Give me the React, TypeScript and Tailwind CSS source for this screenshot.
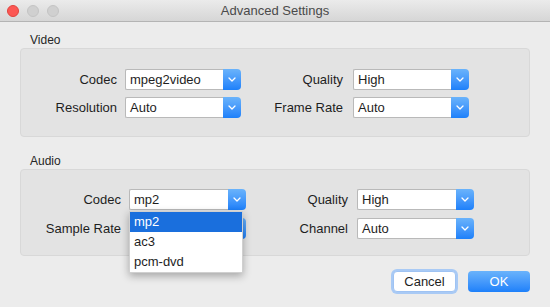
import { clsx } from "clsx";

const font = { fontFamily: '"Liberation Sans", Arial, sans-serif' };

// ─── Popup select (macOS style) ─────────────────────────────────────────────

function Chevron() {
    return (
        <svg width="8" height="5" viewBox="0 0 8 5" aria-hidden="true">
            <path d="M1 1 L4 4 L7 1" fill="none" stroke="white" strokeWidth="1.3" strokeLinecap="round" strokeLinejoin="round" />
        </svg>
    );
}

function Select({ value, width, menu }: { value: string; width: string; menu?: string[] }) {
    return (
        <div className={clsx("relative flex h-[21px]", width)}>
            <div className="flex-1 min-w-0 bg-white border border-[#b9b9b9] border-r-0 rounded-l-[2px] pl-[4px] text-[13px] leading-[19px] text-[#1e1e1e]">
                {value}
            </div>
            <div className="w-[18px] shrink-0 rounded-r-[4px] bg-gradient-to-b from-[#6ab3fb] to-[#1c80fa] flex items-center justify-center">
                <Chevron />
            </div>
            {menu && (
                <div className="absolute left-0 top-[22px] w-[114px] z-10 bg-white shadow-[0_3px_8px_rgba(0,0,0,0.3)] border border-[#d0d0d0]">
                    {menu.map((m, i) => (
                        <div
                            key={m}
                            className={clsx(
                                "h-[20px] pl-[4px] text-[13px] leading-[20px]",
                                i === 0 ? "bg-[#1a6fdd] text-white" : "text-[#1e1e1e]"
                            )}
                        >
                            {m}
                        </div>
                    ))}
                </div>
            )}
        </div>
    );
}

function Label({ text, width }: { text: string; width: string }) {
    return (
        <div className={clsx("shrink-0 text-right text-[13px] leading-[21px] text-[#1e1e1e]", width)}>{text}</div>
    );
}

// ─── Group box ──────────────────────────────────────────────────────────────

function Group({ title, children, className }: { title: string; children: React.ReactNode; className?: string }) {
    return (
        <div className={className}>
            <div className="pl-[10px] text-[12px] leading-[14px] text-[#262626] mb-[1px]">{title}</div>
            <div className="bg-[#e3e3e3] border border-[#d8d8d8] rounded-[4px]">{children}</div>
        </div>
    );
}

export default function App() {
    return (
        <div className="w-[550px] h-[307px] bg-[#ececec] overflow-hidden flex flex-col" style={font}>
            {/* Title bar */}
            <div className="h-[22px] shrink-0 relative flex items-center justify-center bg-gradient-to-b from-[#ebebeb] to-[#d6d6d6] border-b border-[#b4b4b4]">
                <div className="absolute left-[7px] top-[5px] flex gap-[8px]">
                    <span className="w-[12px] h-[12px] rounded-full bg-[#fc5753] border border-[#e0443e]" />
                    <span className="w-[12px] h-[12px] rounded-full bg-[#d0d0d0] border border-[#c4c4c4]" />
                    <span className="w-[12px] h-[12px] rounded-full bg-[#d0d0d0] border border-[#c4c4c4]" />
                </div>
                <span className="text-[13px] text-[#4a4a4a]">Advanced Settings</span>
            </div>

            <div className="px-[20px] pt-[11px]">
                <Group title="Video">
                    <div className="pt-[20px] pb-[18px] flex flex-col gap-[7px]">
                        <div className="flex items-center">
                            <Label text="Codec" width="w-[96px]" />
                            <div className="ml-[8px]"><Select value="mpeg2video" width="w-[116px]" /></div>
                            <Label text="Quality" width="w-[102px]" />
                            <div className="ml-[10px]"><Select value="High" width="w-[116px]" /></div>
                        </div>
                        <div className="flex items-center">
                            <Label text="Resolution" width="w-[96px]" />
                            <div className="ml-[8px]"><Select value="Auto" width="w-[116px]" /></div>
                            <Label text="Frame Rate" width="w-[102px]" />
                            <div className="ml-[10px]"><Select value="Auto" width="w-[116px]" /></div>
                        </div>
                    </div>
                </Group>

                <Group title="Audio" className="mt-[17px]">
                    <div className="pt-[19px] pb-[16px] flex flex-col gap-[8px]">
                        <div className="flex items-center relative z-10">
                            <Label text="Codec" width="w-[100px]" />
                            <div className="ml-[8px]"><Select value="mp2" width="w-[117px]" menu={["mp2", "ac3", "pcm-dvd"]} /></div>
                            <Label text="Quality" width="w-[102px]" />
                            <div className="ml-[9px]"><Select value="High" width="w-[117px]" /></div>
                        </div>
                        <div className="flex items-center">
                            <Label text="Sample Rate" width="w-[100px]" />
                            <div className="ml-[8px]"><Select value="" width="w-[117px]" /></div>
                            <Label text="Channel" width="w-[102px]" />
                            <div className="ml-[9px]"><Select value="Auto" width="w-[117px]" /></div>
                        </div>
                    </div>
                </Group>

                <div className="flex justify-end gap-[12px] mt-[15px]">
                    <button className="w-[63px] h-[21px] rounded-[4px] bg-white text-[13px] text-[#1e1e1e] border border-[#9fc3f3] ring-[2px] ring-[#a9caf5]">
                        Cancel
                    </button>
                    <button className="w-[62px] h-[21px] rounded-[4px] bg-gradient-to-b from-[#6ab3fb] to-[#1c80fa] text-[13px] text-white">
                        OK
                    </button>
                </div>
            </div>
        </div>
    );
}
